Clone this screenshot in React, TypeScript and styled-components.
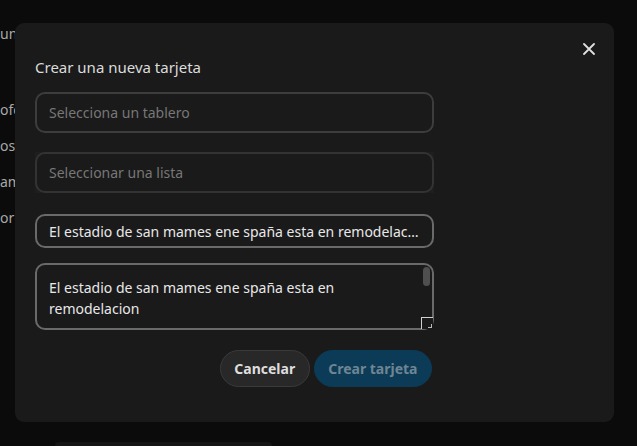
import React from "react";
import styled, { createGlobalStyle } from "styled-components";

const Global = createGlobalStyle`
  html, body { margin: 0; padding: 0; background: #0b0b0b; }
  body { font-family: "Noto Sans", "Open Sans", sans-serif; color-scheme: dark; }
  * { box-sizing: border-box; }
`;

const Page = styled.div`
  width: 637px;
  height: 446px;
  overflow: hidden;
  position: relative;
  display: flex;
  flex-direction: column;
`;

const Sidebar = styled.div`
  display: flex;
  flex-direction: column;
  gap: 16px;
  padding-top: 24px;
`;

const BgLine = styled.div<{ $gapBefore?: number }>`
  font-size: 14px;
  line-height: 20px;
  color: #a8a8a8;
  white-space: nowrap;
  margin-top: ${(p) => p.$gapBefore ?? 0}px;
`;

const BgCard = styled.div`
  margin: auto 0 0 55px;
  width: 217px;
  height: 4px;
  background: #151515;
  border-radius: 8px 8px 0 0;
`;

const Overlay = styled.div`
  position: absolute;
  inset: 0;
  padding: 23px 23px 24px 15px;
  display: flex;
`;

const Modal = styled.div`
  position: relative;
  flex: 1;
  background: #1a1a1a;
  border-radius: 9px;
  padding: 34px 20px 35px 20px;
  display: flex;
  flex-direction: column;
  align-items: flex-start;
`;

const Close = styled.button`
  position: absolute;
  top: 17px;
  right: 16px;
  width: 18px;
  height: 18px;
  padding: 0;
  border: none;
  background: transparent;
  display: flex;
  align-items: center;
  justify-content: center;
  cursor: pointer;
`;

const Title = styled.h2`
  margin: 0 0 14px;
  font-size: 15px;
  font-weight: 400;
  line-height: 21px;
  color: #dcdcdc;
`;

const Form = styled.div`
  width: 399px;
  display: flex;
  flex-direction: column;
`;

const SelectFrame = styled.div<{ $muted?: boolean; $gap: number }>`
  margin-bottom: ${(p) => p.$gap}px;
  background: ${(p) => (p.$muted ? "#1e1e1e" : "transparent")};
`;

const SelectBox = styled.div<{ $muted?: boolean }>`
  height: 41px;
  border: 2px solid ${(p) => (p.$muted ? "#333333" : "#3d3d3d")};
  border-radius: 10px;
  background: #1a1a1a;
  display: flex;
  align-items: center;
  padding: 0 12px;
  font-size: 14px;
  color: #777777;
`;

const TextInput = styled.input`
  height: 34px;
  margin-bottom: 15px;
  border: 2px solid #6a6a6a;
  border-radius: 10px;
  background: #1a1a1a;
  padding: 0 12px;
  font-family: inherit;
  font-size: 14px;
  color: #e8e8e8;
  text-overflow: ellipsis;
  outline: none;
`;

const AreaWrap = styled.div`
  position: relative;
  height: 67px;
  margin-bottom: 20px;
`;

const TextArea = styled.textarea`
  width: 100%;
  height: 100%;
  border: 2px solid #6a6a6a;
  border-radius: 10px;
  background: #1a1a1a;
  padding: 12px 24px 0 12px;
  font-family: inherit;
  font-size: 14px;
  line-height: 21px;
  color: #e8e8e8;
  resize: none;
  overflow: hidden;
  outline: none;
  display: block;
`;

const Thumb = styled.span`
  position: absolute;
  top: 4px;
  right: 4px;
  width: 7px;
  height: 19px;
  border-radius: 4px;
  background: #4f4f4f;
`;

const Grip = styled.span`
  position: absolute;
  right: 1px;
  bottom: 1px;
  width: 12px;
  height: 12px;
  border-top: 1px solid #d0d0d0;
  border-left: 1px solid #d0d0d0;
  background: #1a1a1a;
  &::after {
    content: "";
    position: absolute;
    right: 1px;
    bottom: 1px;
    width: 3px;
    height: 3px;
    border-right: 1px solid #bbb;
    border-bottom: 1px solid #bbb;
  }
`;

const Actions = styled.div`
  display: flex;
  justify-content: flex-end;
  gap: 4px;
  padding-right: 2px;
`;

const Button = styled.button<{ $primary?: boolean }>`
  height: 37px;
  padding: 0 13.5px;
  border-radius: 19px;
  border: 1px solid ${(p) => (p.$primary ? "#0b3b56" : "#3a3a3a")};
  background: ${(p) => (p.$primary ? "#0b3b56" : "#282828")};
  color: ${(p) => (p.$primary ? "#6f8594" : "#dedede")};
  font-family: inherit;
  font-size: 14px;
  font-weight: 700;
  cursor: pointer;
`;

export default function App() {
  return (
    <>
      <Global />
      <Page>
        <Sidebar>
          <BgLine>un</BgLine>
          <BgLine $gapBefore={40}>ofo</BgLine>
          <BgLine>os</BgLine>
          <BgLine>am</BgLine>
          <BgLine>or u</BgLine>
        </Sidebar>
        <BgCard />
        <Overlay>
          <Modal>
            <Close aria-label="Cerrar">
              <svg width="12" height="12" viewBox="0 0 12 12">
                <path d="M1 1 L11 11 M11 1 L1 11" stroke="#e0e0e0" strokeWidth="1.8" strokeLinecap="round" />
              </svg>
            </Close>
            <Title>Crear una nueva tarjeta</Title>
            <Form>
              <SelectFrame $gap={19}>
                <SelectBox>Selecciona un tablero</SelectBox>
              </SelectFrame>
              <SelectFrame $gap={21} $muted>
                <SelectBox $muted>Seleccionar una lista</SelectBox>
              </SelectFrame>
              <TextInput
                readOnly
                value="El estadio de san mames ene spaña esta en remodelacion"
              />
              <AreaWrap>
                <TextArea
                  readOnly
                  value="El estadio de san mames ene spaña esta en remodelacion"
                />
                <Thumb />
                <Grip />
              </AreaWrap>
              <Actions>
                <Button>Cancelar</Button>
                <Button $primary disabled>Crear tarjeta</Button>
              </Actions>
            </Form>
          </Modal>
        </Overlay>
      </Page>
    </>
  );
}
